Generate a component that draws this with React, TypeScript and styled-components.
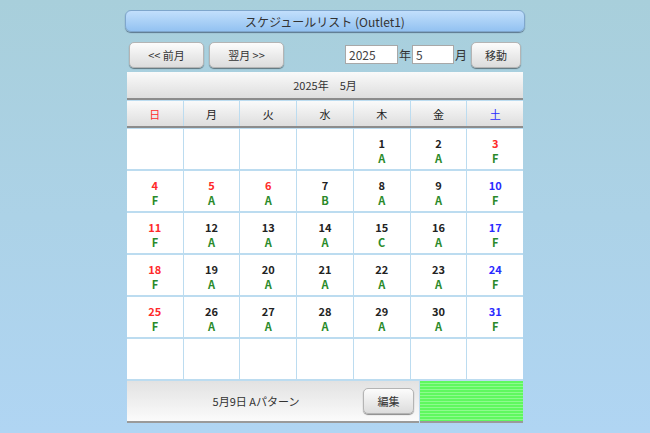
import styled, { createGlobalStyle, css } from "styled-components";

const GlobalStyle = createGlobalStyle`
  html, body {
    margin: 0;
    padding: 0;
  }

  body {
    min-height: 100vh;
    background: linear-gradient(#a8cfdb, #b0d5f3);
    font-family: "Noto Sans CJK JP", "Noto Sans", sans-serif;
    color: #333;
  }
`;

type DayKind = "normal" | "holiday" | "saturday";

interface DayEntry {
  day: number;
  pattern: string;
  kind: DayKind;
}

const WEEKDAYS = ["日", "月", "火", "水", "木", "金", "土"];

// May 2025 starts on a Thursday
const PATTERNS: Record<number, string> = {
  1: "A", 2: "A", 3: "F", 4: "F", 5: "A", 6: "A", 7: "B", 8: "A", 9: "A",
  10: "F", 11: "F", 12: "A", 13: "A", 14: "A", 15: "C", 16: "A", 17: "F",
  18: "F", 19: "A", 20: "A", 21: "A", 22: "A", 23: "A", 24: "F", 25: "F",
  26: "A", 27: "A", 28: "A", 29: "A", 30: "A", 31: "F",
};

const HOLIDAYS = [3, 4, 5, 6];

function buildCells(): (DayEntry | null)[] {
  const cells: (DayEntry | null)[] = [null, null, null, null];
  for (let d = 1; d <= 31; d++) {
    const col = cells.length % 7;
    let kind: DayKind = "normal";
    if (col === 0 || HOLIDAYS.includes(d)) kind = "holiday";
    else if (col === 6) kind = "saturday";
    cells.push({ day: d, pattern: PATTERNS[d], kind });
  }
  while (cells.length < 42) cells.push(null);
  return cells;
}

const Page = styled.div`
  width: 400px;
  margin: 0 auto;
  padding-top: 10px;
`;

const TitleBar = styled.div`
  height: 20px;
  border-radius: 6px;
  border: 1px solid #7fa6cc;
  background: linear-gradient(#c2dffc, #93c2f1);
  box-shadow: 0 1px 1px rgba(40, 60, 90, 0.6);
  display: flex;
  align-items: center;
  justify-content: center;
  font-size: 12px;
  color: #333;
`;

const Toolbar = styled.div`
  margin-top: 9px;
  height: 27px;
  padding: 0 4px 0 4px;
  display: flex;
  align-items: center;
  gap: 5px;
`;

const Spacer = styled.div`
  flex: 1;
`;

const Button = styled.button<{ $width: number }>`
  width: ${(p) => p.$width}px;
  height: 26px;
  border: 1px solid #b4b4b4;
  border-radius: 5px;
  background: linear-gradient(#fcfcfc, #dcdcdc);
  box-shadow: 0 1px 1px rgba(0, 0, 0, 0.45);
  font-family: inherit;
  font-size: 11px;
  color: #333;
  padding: 0;
  cursor: pointer;
`;

const FieldGroup = styled.div`
  display: flex;
  align-items: center;
  gap: 1px;
  font-size: 12px;
  color: #333;
  margin-right: -1px;
`;

const TextInput = styled.input<{ $width: number }>`
  width: ${(p) => p.$width}px;
  height: 19px;
  box-sizing: border-box;
  border: 1px solid #a8a8a8;
  padding: 0 3px;
  font-family: inherit;
  font-size: 12px;
  color: #444;
  background: #fff;
`;

const Calendar = styled.div`
  margin: 4px 2px 0;
  background: #bcdcf0;
`;

const MonthHeader = styled.div`
  height: 26px;
  border-bottom: 2px solid #8c8c8c;
  background: linear-gradient(#fafafa, #dedede);
  display: flex;
  align-items: center;
  justify-content: center;
  font-size: 11px;
  color: #333;
  white-space: pre;
`;

const WeekRow = styled.div`
  display: grid;
  grid-template-columns: repeat(7, 1fr);
  gap: 0 1px;
  margin-top: 1px;
  background: #bcdcf0;
  border-bottom: 2px solid #8c8c8c;
`;

const dayColor = (kind: DayKind) => {
  switch (kind) {
    case "holiday":
      return css`color: #ff2a2a;`;
    case "saturday":
      return css`color: #2a2aff;`;
    default:
      return css`color: #222;`;
  }
};

const WeekCell = styled.div<{ $kind: DayKind }>`
  height: 25px;
  background: linear-gradient(#fafafa, #dedede);
  display: flex;
  align-items: center;
  justify-content: center;
  font-size: 11px;
  ${(p) => dayColor(p.$kind)}
`;

const DayGrid = styled.div`
  display: grid;
  grid-template-columns: repeat(7, 1fr);
  grid-auto-rows: 40px;
  gap: 2px 1px;
  padding-top: 1px;
  background: #bcdcf0;
`;

const DayCell = styled.div`
  background: #fff;
  display: flex;
  flex-direction: column;
  align-items: center;
  padding-top: 7px;
  font-size: 11px;
  font-weight: bold;
  line-height: 15px;
`;

const DayNumber = styled.span<{ $kind: DayKind }>`
  ${(p) => dayColor(p.$kind)}
`;

const Pattern = styled.span`
  color: #2a8a2a;
`;

const Footer = styled.div`
  display: flex;
  gap: 1px;
  height: 42px;
  margin-top: 2px;
`;

const Status = styled.div`
  flex: 1;
  box-sizing: border-box;
  border-bottom: 2px solid #9a9a9a;
  background: linear-gradient(#e2e2e2, #fbfbfb);
  display: flex;
  align-items: center;
  padding-right: 5px;
`;

const StatusText = styled.div`
  flex: 1;
  text-align: center;
  font-size: 11px;
  color: #333;
  padding-left: 22px;
`;

const Swatch = styled.div`
  width: 103px;
  box-sizing: border-box;
  border-bottom: 2px solid #9a9a9a;
  background: repeating-linear-gradient(
    #5ff85f 0 2px,
    #8dfb8d 2px 3px
  );
`;

function App() {
  const cells = buildCells();

  return (
    <>
      <GlobalStyle />
      <Page>
        <TitleBar>スケジュールリスト (Outlet1)</TitleBar>
        <Toolbar>
          <Button $width={75}>&lt;&lt; 前月</Button>
          <Button $width={75}>翌月 &gt;&gt;</Button>
          <Spacer />
          <FieldGroup>
            <TextInput $width={53} defaultValue="2025" />
            <span>年</span>
            <TextInput $width={42} defaultValue="5" />
            <span>月</span>
          </FieldGroup>
          <Button $width={50}>移動</Button>
        </Toolbar>
        <Calendar>
          <MonthHeader>2025年　5月</MonthHeader>
          <WeekRow>
            {WEEKDAYS.map((w, i) => (
              <WeekCell
                key={w}
                $kind={i === 0 ? "holiday" : i === 6 ? "saturday" : "normal"}
              >
                {w}
              </WeekCell>
            ))}
          </WeekRow>
          <DayGrid>
            {cells.map((c, i) => (
              <DayCell key={i}>
                {c && (
                  <>
                    <DayNumber $kind={c.kind}>{c.day}</DayNumber>
                    <Pattern>{c.pattern}</Pattern>
                  </>
                )}
              </DayCell>
            ))}
          </DayGrid>
          <Footer>
            <Status>
              <StatusText>5月9日 Aパターン</StatusText>
              <Button $width={51}>編集</Button>
            </Status>
            <Swatch />
          </Footer>
        </Calendar>
      </Page>
    </>
  );
}

export default App;
